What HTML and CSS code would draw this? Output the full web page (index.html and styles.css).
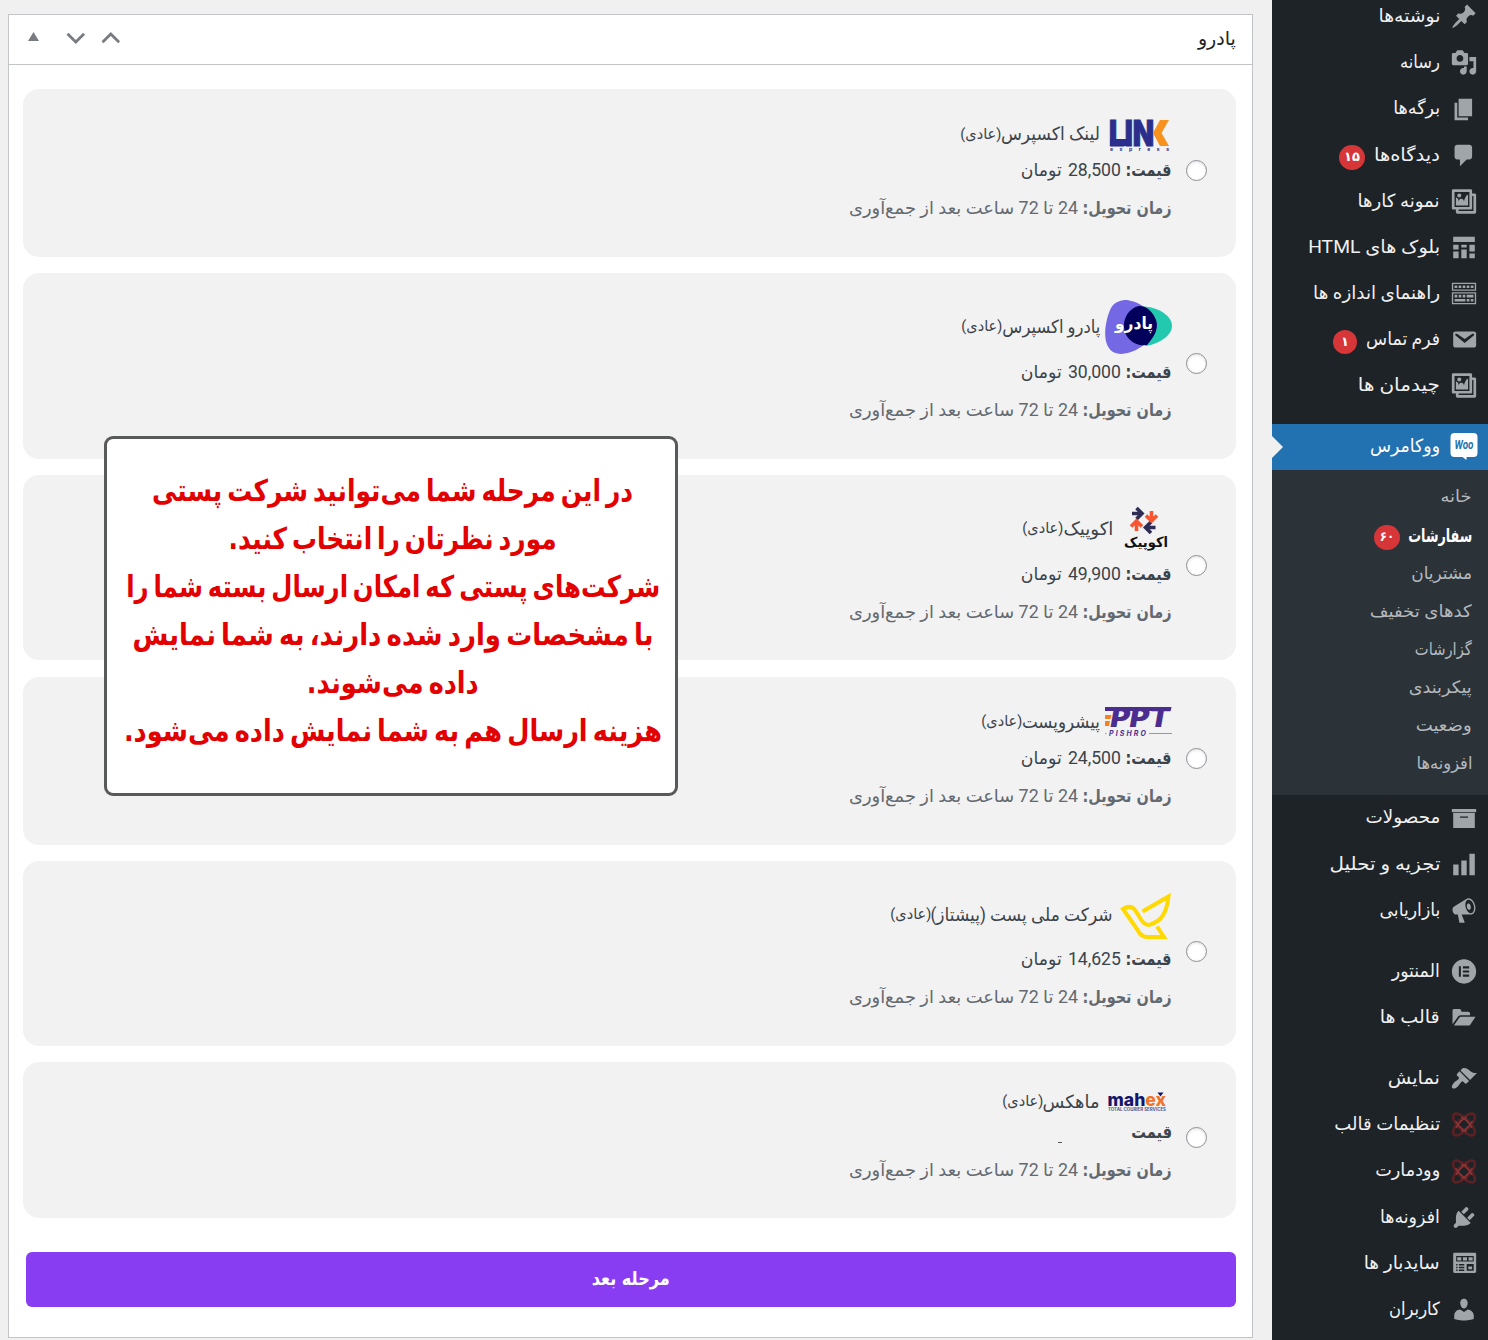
FILE: index.html
```html
<!DOCTYPE html>
<html lang="fa" dir="rtl">
<head>
<meta charset="utf-8">
<title>پادرو</title>
<link rel="stylesheet" href="styles.css">
</head>
<body>
<nav class="sidebar">
  <a class="item"><svg class="icon" viewBox="0 0 20 20"><path d="M10.44 3.02l1.82-1.82 6.36 6.35-1.83 1.82c-1.05-.68-2.48-.57-3.41.36l-.75.75c-.92.93-1.04 2.35-.35 3.41l-1.83 1.82-2.41-2.41-2.8 2.79c-.42.42-3.38 2.71-3.8 2.29s1.86-3.39 2.28-3.81l2.79-2.79L4.1 9.36l1.83-1.82c1.05.69 2.48.57 3.4-.36l.75-.75c.93-.92 1.05-2.35.36-3.41z"/></svg><span class="fit" data-w="62">نوشته‌ها</span></a>
  <a class="item"><svg class="icon" viewBox="0 0 20 20"><path fill-rule="evenodd" d="M13 11V4c0-.55-.45-1-1-1h-1.67L9 1H5L3.67 3H2c-.55 0-1 .45-1 1v7c0 .55.45 1 1 1h10c.55 0 1-.45 1-1zM7 4.5c1.38 0 2.5 1.12 2.5 2.5S8.38 9.5 7 9.5 4.500 8.380 4.500 7 5.620 4.500 7 4.500zM14 6h5v10.500c0 1.380-1.120 2.500-2.500 2.500S14 17.880 14 16.500s1.120-2.500 2.500-2.500c.17 0 .34.020.5.050V9h-3V6zm-4 8.050V13h2v3.500c0 1.380-1.120 2.500-2.500 2.500S7 17.880 7 16.500 8.120 14 9.500 14c.17 0 .34.020.5.050z"/></svg><span class="fit" data-w="40">رسانه</span></a>
  <a class="item"><svg class="icon" viewBox="0 0 20 20"><path d="M6 15V2h10v13H6zm-1 1h8v2H3V5h2v11z"/></svg><span class="fit" data-w="47">برگه‌ها</span></a>
  <a class="item"><svg class="icon" viewBox="0 0 20 20"><path d="M5 2h9c1.1 0 2 .9 2 2v7c0 1.1-.9 2-2 2h-2l-5 5v-5H5c-1.100 0-2-.9-2-2V4c0-1.100.9-2 2-2z"/></svg><span class="fit" data-w="66">دیدگاه‌ها</span><b class="badge">۱۵</b></a>
  <a class="item"><svg class="icon" viewBox="0 0 20 20"><path fill-rule="evenodd" d="M16 4h1.960c.57 0 1.040.47 1.040 1.040v12.920c0 .57-.47 1.040-1.040 1.040H5.040C4.470 19 4 18.530 4 17.960V16H2.040C1.470 16 1 15.530 1 14.960V2.040C1 1.470 1.470 1 2.040 1h12.920c.57 0 1.040.47 1.040 1.040V4zM3 14h11V3H3v11zm5-8.500C8 4.670 7.330 4 6.500 4S5 4.670 5 5.500 5.670 7 6.500 7 8 6.330 8 5.500zm2 4.500s1-5 3-5v8H4V7c2 0 2 3 2 3s.33-2 2-2 2 2 2 2zm7 7V6h-1v8.960c0 .57-.47 1.040-1.040 1.040H6v1h11z"/></svg><span class="fit" data-w="82">نمونه کارها</span></a>
  <a class="item"><svg class="icon" viewBox="0 0 20 20"><path d="M2 2h16v4H2zM2 8h4v3.500H2zM8 8h4v2H8zM14 8h4v5h-4zM2 13h4v5H2zM8 11.500h4V18H8zM14 14.500h4V18h-4z"/></svg><span class="fit" data-w="132">بلوک های HTML</span></a>
  <a class="item"><svg class="icon" viewBox="0 0 20 20"><path fill-rule="evenodd" d="M19 2v6H1V2h18zm-1 5V3H2v4h16zM5 4v2H3V4h2zm3 0v2H6V4h2zm3 0v2H9V4h2zm3 0v2h-2V4h2zm3 0v2h-2V4h2zm2 5v9H1V9h18zm-1 8v-7H2v7h16zM5 11v2H3v-2h2zm3 0v2H6v-2h2zm3 0v2H9v-2h2zm6 0v2h-5v-2h5zm-6 3v2H3v-2h8zm3 0v2h-2v-2h2zm3 0v2h-2v-2h2z"/></svg><span class="fit" data-w="127">راهنمای اندازه ها</span></a>
  <a class="item"><svg class="icon" viewBox="0 0 20 20"><path fill-rule="evenodd" d="M3.870 4h13.250C18.370 4 19 4.590 19 5.790v8.420c0 1.190-.63 1.790-1.880 1.790H3.870c-1.250 0-1.880-.6-1.880-1.790V5.790c0-1.200.63-1.790 1.880-1.790zm6.620 8.600l6.740-5.530c.24-.2.43-.66.13-1.070-.29-.41-.82-.42-1.170-.17l-5.700 3.860L4.800 5.830c-.35-.25-.88-.24-1.170.17-.3.41-.11.87.13 1.070z"/></svg><span class="fit" data-w="74">فرم تماس</span><b class="badge one">۱</b></a>
  <a class="item"><svg class="icon" viewBox="0 0 20 20"><path fill-rule="evenodd" d="M16 4h1.960c.57 0 1.040.47 1.040 1.040v12.920c0 .57-.47 1.040-1.040 1.040H5.040C4.470 19 4 18.530 4 17.960V16H2.040C1.470 16 1 15.530 1 14.960V2.040C1 1.470 1.470 1 2.040 1h12.920c.57 0 1.040.47 1.040 1.040V4zM3 14h11V3H3v11zm5-8.500C8 4.670 7.330 4 6.500 4S5 4.670 5 5.500 5.670 7 6.500 7 8 6.330 8 5.500zm2 4.500s1-5 3-5v8H4V7c2 0 2 3 2 3s.33-2 2-2 2 2 2 2zm7 7V6h-1v8.960c0 .57-.47 1.040-1.040 1.040H6v1h11z"/></svg><span class="fit" data-w="82">چیدمان ها</span></a>
  <a class="item active gap"><svg class="icon woo" viewBox="0 0 27 27"><path fill="#fff" d="M4 0h19a4 4 0 0 1 4 4v16a4 4 0 0 1-4 4h-7v3l-4-3H4a4 4 0 0 1-4-4V4a4 4 0 0 1 4-4z"/><text x="4" y="16" textLength="19" lengthAdjust="spacingAndGlyphs" direction="ltr">Woo</text></svg><span class="fit" data-w="70">ووکامرس</span></a>
  <div class="submenu">
    <a><span class="fit" data-w="31">خانه</span></a>
    <a class="current"><span class="fit" data-w="64">سفارشات</span><b class="badge">۶۰</b></a>
    <a><span class="fit" data-w="61">مشتریان</span></a>
    <a><span class="fit" data-w="102">کدهای تخفیف</span></a>
    <a><span class="fit" data-w="57">گزارشات</span></a>
    <a><span class="fit" data-w="63">پیکربندی</span></a>
    <a><span class="fit" data-w="56">وضعیت</span></a>
    <a><span class="fit" data-w="56">افزونه‌ها</span></a>
  </div>
  <a class="item"><svg class="icon" viewBox="0 0 20 20"><path fill-rule="evenodd" d="M19 3v2.300H1V3h18zM2 6h16v11H2V6zm11 3.500V8.500H7v1h6z"/></svg><span class="fit" data-w="75">محصولات</span></a>
  <a class="item"><svg class="icon" viewBox="0 0 20 20"><path d="M18 18V2h-4v16h4zm-6 0V7H8v11h4zm-6 0v-8H2v8h4z"/></svg><span class="fit" data-w="111">تجزیه و تحلیل</span></a>
  <a class="item"><svg class="icon" viewBox="0 0 20 20"><path fill-rule="evenodd" d="M18.150 5.940c.46 1.620.38 3.220-.02 4.480-.42 1.280-1.260 2.180-2.300 2.480-.16.060-.26.060-.4.060-.06.020-.12.020-.18.020-.06.020-.14.020-.22.020h-6.800l2.220 5.500c.02.140-.06.260-.14.340-.08.100-.24.160-.34.160H6.950c-.1 0-.26-.06-.34-.16-.08-.08-.16-.2-.14-.34l-1-5.500H4.250l-.02-.02c-.5.060-1.080-.18-1.540-.62s-.88-1.080-1.060-1.880c-.24-.8-.2-1.560-.02-2.200.18-.62.58-1.080 1.060-1.300l.02-.02 9-5.400c.1-.06.18-.1.24-.16.060-.04.140-.08.240-.12.160-.08.280-.12.500-.18 1.040-.3 2.240.1 3.220.98s1.840 2.240 2.260 3.860zm-2.580 5.980h-.02c.4-.1.740-.34 1.040-.7.580-.7.860-1.760.860-3.040 0-.64-.1-1.300-.28-1.980-.34-1.360-1.020-2.500-1.780-3.240s-1.680-1.100-2.460-.88c-.82.220-1.400.960-1.700 2-.32 1.040-.28 2.360.06 3.720.38 1.360 1 2.500 1.800 3.240.78.740 1.620 1.100 2.480.88zm-2.540-7.080c.22-.04.42-.02.62.040.38.160.76.480 1.020 1s.42 1.200.42 1.780c0 .3-.04.56-.12.800-.18.480-.44.840-.86.940-.34.100-.8-.06-1.140-.4s-.64-.86-.78-1.500c-.18-.62-.12-1.240.02-1.720s.48-.84.82-.94z"/></svg><span class="fit" data-w="61">بازاریابی</span></a>
  <a class="item gap"><svg class="icon" viewBox="0 0 20 20"><path fill-rule="evenodd" d="M10 1a9 9 0 1 1 0 18 9 9 0 0 1 0-18zM6.200 6.200v7.600h1.500V6.200zM9.200 6.200v1.500h4.600V6.200zm0 3.050v1.500h4.600v-1.500zm0 3.050v1.500h4.600v-1.500z"/></svg><span class="fit" data-w="48">المنتور</span></a>
  <a class="item"><svg class="icon" viewBox="0 0 20 20"><path d="M1.500 15V5c0-.8.500-1.300 1.300-1.300h3.700C7.300 3.700 8 4.400 8 5.200v.6h5c.9 0 1.500.6 1.500 1.500v1H7.700c-.9 0-1.700.4-2.200 1.100zM2.500 16l4-5.800c.4-.6.900-.8 1.600-.8H18.500L15 14.900c-.5.8-1 1.100-1.800 1.100z"/></svg><span class="fit" data-w="60">قالب ها</span></a>
  <a class="item gap"><svg class="icon" viewBox="0 0 20 20"><path d="M14.480 11.060L7.410 3.990l1.500-1.500c.5-.56 2.300-.47 3.510.32 1.210.8 1.430 1.280 2.910 2.100 1.180.64 2.450 1.260 4.450.85zm-.71.71L6.700 4.700 4.930 6.470c-.39.39-.39 1.020 0 1.410l1.060 1.060c.39.39.39 1.030 0 1.420-.6.600-1.430 1.110-2.210 1.690-.35.26-.7.53-1.010.84C1.430 14.230.4 16.080 1.400 17.070c.99 1 2.840-.03 4.180-1.360.31-.31.58-.66.85-1.020.57-.78 1.080-1.610 1.690-2.210.39-.39 1.020-.39 1.410 0l1.060 1.060c.39.39 1.020.39 1.410 0z"/></svg><span class="fit" data-w="52">نمایش</span></a>
  <a class="item"><svg class="icon knot" viewBox="0 0 20 20"><g fill="none"><ellipse cx="10" cy="10" rx="10.600" ry="4.300" transform="rotate(45 10 10)"/><ellipse cx="10" cy="10" rx="10.600" ry="4.300" transform="rotate(-45 10 10)"/><path class="hot" d="M3.800 7.500c1.500 3 4 5.500 8 8M16.200 7.500c-1.500 3-4 5.500-8 8M8 4.500c3 1.500 6 4.500 8 8M12 4.500c-3 1.500-6 4.500-8 8"/></g></svg><span class="fit" data-w="106">تنظیمات قالب</span></a>
  <a class="item"><svg class="icon knot" viewBox="0 0 20 20"><g fill="none"><ellipse cx="10" cy="10" rx="10.600" ry="4.300" transform="rotate(45 10 10)"/><ellipse cx="10" cy="10" rx="10.600" ry="4.300" transform="rotate(-45 10 10)"/><path class="hot" d="M3.800 7.500c1.500 3 4 5.500 8 8M16.200 7.500c-1.500 3-4 5.500-8 8M8 4.500c3 1.500 6 4.500 8 8M12 4.500c-3 1.500-6 4.500-8 8"/></g></svg><span class="fit" data-w="65">وودمارت</span></a>
  <a class="item"><svg class="icon" viewBox="0 0 20 20"><path d="M13.110 4.360L9.870 7.600 8 5.730l3.240-3.240c.35-.34 1.050-.2 1.560.32.520.51.660 1.210.310 1.550zm-8 1.770l.91-1.120 9.010 9.010-1.190.84c-.71.710-2.630 1.160-3.820 1.160H6.140L4.900 17.260c-.59.590-1.540.590-2.120 0-.59-.58-.59-1.530 0-2.120l1.240-1.240v-3.880c0-1.130.4-3.190 1.090-3.890zm7.260 3.970l3.240-3.240c.34-.35 1.040-.21 1.550.31.520.51.660 1.210.31 1.550l-3.240 3.250z"/></svg><span class="fit" data-w="60">افزونه‌ها</span></a>
  <a class="item"><svg class="icon" viewBox="0 0 20 20"><path fill-rule="evenodd" d="M3 2h15c.6 0 1 .4 1 1v13c0 .6-.4 1-1 1H3c-.6 0-1-.4-1-1V3c0-.6.400-1 1-1zm1.200 2.500v4h13v-4zM5 5.300h3v2.400H5zm4.200 0h3v2.400h-3zm4.200 0h3v2.400h-3zM4.200 10.300v1.200h1v-1.200zm2 0v1.200h4v-1.200zM4.200 12.400v1.200h1v-1.200zm2 0v1.200h4v-1.200zM4.200 14.500v1h1v-1zm2 0v1h4v-1zM12 10.300v5h5.200v-5zm1.200 2h2.800v2h-2.800z"/></svg><span class="fit" data-w="76">سایدبار ها</span></a>
  <a class="item"><svg class="icon" viewBox="0 0 20 20"><path d="M10 9.250c-2.270 0-2.730-3.440-2.730-3.440C7 4.020 7.820 2 9.970 2c2.160 0 2.980 2.020 2.710 3.810 0 0-.41 3.440-2.680 3.440zm-2.800.75L10 11.820 12.720 10c2.390 0 4.520 2.330 4.520 4.530v2.490s-3.650 1.130-7.240 1.130c-3.650 0-7.240-1.130-7.240-1.130v-2.490c0-2.250 1.940-4.480 4.470-4.480z"/></svg><span class="fit" data-w="51">کاربران</span></a>
</nav>

<main class="content">
  <section class="panel">
    <header class="panel-head">
      <h2><span class="fit" data-w="38">پادرو</span></h2>
      <svg class="handles" viewBox="0 0 96 20"><path class="line" d="M77.500 14.200l8.300-8.200 8.300 8.200M42.500 5.800l8.300 8.200 8.300-8.200"/><path d="M3 13l5.500-9 5.500 9z"/></svg>
    </header>
    <div class="list">
      <label class="card">
        <input type="radio" name="c">
        <div class="info">
          <div class="name h38">
            <svg class="logo" width="68" height="36" viewBox="0 0 68 36" direction="ltr"><text x="5" y="29.500" class="link" textLength="45" lengthAdjust="spacingAndGlyphs">LIN</text><path fill="#2b2e8c" d="M6 23h17v7H6z"/><path fill="#f7921e" d="M56 4h9l-7.500 13L65 30h-9l-7-13z"/><text x="6" y="34.500" class="express" textLength="59">express</text></svg>
            <span class="fit" data-w="99">لینک اکسپرس</span><small class="fit" data-w="41">(عادی)</small>
          </div>
          <div class="price"><b class="fit" data-w="46">قیمت:</b><span class="fit" data-w="53">28,500</span><span class="fit" data-w="41">تومان</span></div>
          <div class="time"><b class="fit" data-w="89">زمان تحویل:</b><span class="fit" data-w="229">24 تا 72 ساعت بعد از جمع‌آوری</span></div>
        </div>
      </label>
      <label class="card">
        <input type="radio" name="c">
        <div class="info">
          <div class="name h56">
            <svg class="logo" width="68" height="56" viewBox="0 0 68 56"><g transform="translate(0 1)"><path fill="#22c9ae" d="M33 7c14-3 35 6 35 19 0 10-14 18-26 20z"/><path fill="#7468e4" d="M20 0c9-1 27 8 32 20 4 10-6 23-20 30-10 5-22 6-27-2C-2 38 2 18 7 8c3-5 7-7 13-8z"/><path fill="#03005c" d="M35 6c8 0 14 6 17 14 3 9-2 17-9 25-11 2-22-6-23-17-1-10 5-20 15-22z"/><text x="30" y="29" class="padro" text-anchor="middle" textLength="38" lengthAdjust="spacingAndGlyphs">پادرو</text></g></svg>
            <span class="fit" data-w="98">پادرو اکسپرس</span><small class="fit" data-w="41">(عادی)</small>
          </div>
          <div class="price"><b class="fit" data-w="46">قیمت:</b><span class="fit" data-w="53">30,000</span><span class="fit" data-w="41">تومان</span></div>
          <div class="time"><b class="fit" data-w="89">زمان تحویل:</b><span class="fit" data-w="229">24 تا 72 ساعت بعد از جمع‌آوری</span></div>
        </div>
      </label>
      <label class="card">
        <input type="radio" name="c">
        <div class="info">
          <div class="name h56">
            <svg class="logo" width="55" height="56" viewBox="0 0 55 56"><g fill="none" stroke-width="3.600"><g stroke="#2f2c55"><path d="M15 12.500h9M19.500 7l5.500 5.500-5.500 5.500"/><path d="M38.500 26.500h-9M34 21l-5.500 5.500 5.500 5.500"/></g><g stroke="#f9532f"><path d="M34.500 10v9M29 14.500l5.500 5.500 5.500-5.500"/><path d="M19.500 30v-9M14 25.500l5.500-5.500 5.500 5.500"/></g></g><text x="29" y="46" class="okopic" text-anchor="middle" textLength="44" lengthAdjust="spacingAndGlyphs">اکوپیک</text></svg>
            <span class="fit" data-w="50">اکوپیک</span><small class="fit" data-w="41">(عادی)</small>
          </div>
          <div class="price"><b class="fit" data-w="46">قیمت:</b><span class="fit" data-w="53">49,900</span><span class="fit" data-w="41">تومان</span></div>
          <div class="time"><b class="fit" data-w="89">زمان تحویل:</b><span class="fit" data-w="229">24 تا 72 ساعت بعد از جمع‌آوری</span></div>
        </div>
      </label>
      <label class="card">
        <input type="radio" name="c">
        <div class="info">
          <div class="name h38">
            <svg class="logo" width="68" height="36" viewBox="0 0 68 36" direction="ltr"><path fill="#f58220" d="M1 11h6.500l-1 4H1zM1 17h5l-1 5H1z"/><path fill="#4b2d8f" d="M1 3h66.500l-1 4H1z"/><text x="6.500" y="23" class="ppt" textLength="59" lengthAdjust="spacingAndGlyphs">PPT</text><text x="5" y="31.500" class="pishro" textLength="37">PISHRO</text><path stroke="#999" d="M1 29.500h1.500M45 29.500h23"/></svg>
            <span class="fit" data-w="78">پیشروپست</span><small class="fit" data-w="41">(عادی)</small>
          </div>
          <div class="price"><b class="fit" data-w="46">قیمت:</b><span class="fit" data-w="53">24,500</span><span class="fit" data-w="41">تومان</span></div>
          <div class="time"><b class="fit" data-w="89">زمان تحویل:</b><span class="fit" data-w="229">24 تا 72 ساعت بعد از جمع‌آوری</span></div>
        </div>
      </label>
      <label class="card">
        <input type="radio" name="c">
        <div class="info">
          <div class="name h56">
            <svg class="logo" width="55" height="56" viewBox="0 0 55 56"><path fill="none" stroke="#ffd900" stroke-width="4" d="M25.500 24.500L51.500 9.500C50.500 20 48 27 43 32c-4 4-8 5-11 6-3 0-5-1-7-4l-7-11c-3-4-7-4-12-1l14 20c3 6 6 8 10 8h17l-7-10.500"/></svg>
            <span class="fit" data-w="182">شرکت ملی پست (پیشتاز)</span><small class="fit" data-w="41">(عادی)</small>
          </div>
          <div class="price"><b class="fit" data-w="46">قیمت:</b><span class="fit" data-w="53">14,625</span><span class="fit" data-w="41">تومان</span></div>
          <div class="time"><b class="fit" data-w="89">زمان تحویل:</b><span class="fit" data-w="229">24 تا 72 ساعت بعد از جمع‌آوری</span></div>
        </div>
      </label>
      <label class="card">
        <input type="radio" name="c">
        <div class="info">
          <div class="name h26">
            <svg class="logo" width="68" height="26" viewBox="0 0 68 26" direction="ltr"><text x="3.500" y="17.500" class="mahex" textLength="58.500" lengthAdjust="spacingAndGlyphs"><tspan fill="#15156b">mah</tspan><tspan fill="#f0742a">ex</tspan></text><path fill="#15156b" d="M53.500 4.500h6l-3 4z"/><text x="4" y="22.500" class="tcs" textLength="58" lengthAdjust="spacingAndGlyphs">TOTAL COURIER SERVICES</text></svg>
            <span class="fit" data-w="57">ماهکس</span><small class="fit" data-w="41">(عادی)</small>
          </div>
          <div class="price"><b class="fit" data-w="41">قیمت</b><i class="speck"></i></div>
          <div class="time"><b class="fit" data-w="89">زمان تحویل:</b><span class="fit" data-w="229">24 تا 72 ساعت بعد از جمع‌آوری</span></div>
        </div>
      </label>
      <button class="next"><span class="fit" data-w="78">مرحله بعد</span></button>
    </div>
  </section>
</main>

<aside class="note">
  <p><span class="fit" data-w="481">در این مرحله شما می‌توانید شرکت پستی</span></p>
  <p><span class="fit" data-w="328">مورد نظرتان را انتخاب کنید.</span></p>
  <p><span class="fit" data-w="534">شرکت‌های پستی که امکان ارسال بسته شما را</span></p>
  <p><span class="fit" data-w="521">با مشخصات وارد شده دارند، به شما نمایش</span></p>
  <p><span class="fit" data-w="172">داده می‌شوند.</span></p>
  <p><span class="fit" data-w="538">هزینه ارسال هم به شما نمایش داده می‌شود.</span></p>
</aside>
<script src="fit.js"></script>
</body>
</html>
```
FILE: fit.js
```js
// Condenses or widens each label horizontally to its intended measure.
document.querySelectorAll('.fit').forEach(function (el) {
  var inner = document.createElement('span');
  inner.className = 'fit-inner';
  inner.textContent = el.textContent;
  el.textContent = '';
  el.appendChild(inner);
  var w = Number(el.dataset.w);
  var natural = inner.getBoundingClientRect().width;
  el.style.width = w + 'px';
  inner.style.transform = 'scaleX(' + (w / natural) + ')';
});
```
FILE: styles.css
```css
* { box-sizing: border-box; }
body {
  margin: 0;
  height: 1340px;
  display: flex;
  overflow: hidden;
  background: #f0f0f1;
  color: #3c434a;
  font: 18px/1.4 Roboto, "DejaVu Sans", sans-serif;
}
.fit { display: block; flex: none; white-space: nowrap; }
.fit-inner { display: inline-block; transform-origin: right center; }

.sidebar { width: 216px; flex: none; margin-top: -6.3px; background: #1d2327; color: #f0f0f1; height: 1347px; }
.item { display: flex; align-items: center; height: 46.15px; padding-right: 10px; }
.item.gap { margin-top: 15px; }
.item .fit { margin-right: 10px; position: relative; top: -1px; }
.icon { width: 28px; height: 27px; flex: none; fill: #a0a5aa; }
.icon.knot { stroke: #5a2124; stroke-width: 2; }
.icon .hot { stroke: #8d3436; stroke-width: 1.2; }
.active { position: relative; height: 46px; background: #2271b1; color: #fff; }
.active::after {
  content: ""; position: absolute; left: 0; top: 12px;
  border: 11px solid transparent; border-left-color: #f0f0f1; border-right-width: 0;
}
.woo text { fill: #2271b1; font: bold italic 12px Roboto, sans-serif; }
.badge {
  margin-right: 9px; min-width: 26px; height: 25px; border-radius: 13px; position: relative; top: 2px;
  background: #d63638; color: #fff; font-size: 13px; line-height: 23px; text-align: center;
}
.badge.one { min-width: 24px; height: 24px; }
.submenu { background: #2c3338; color: #b4b9be; padding: 8px 16px 11px; height: 325px; }
.submenu a { display: flex; align-items: center; height: 38.2px; font-size: 17px; }
.submenu .current { color: #fff; font: bold 18px "DejaVu Sans Condensed", sans-serif; }
.submenu .badge { margin-right: 8px; }

.content { flex: 1; padding: 14px 19px 2px 8px; }
.panel { height: 1324px; background: #fff; border: 1px solid #c3c4c7; }
.panel-head { height: 50px; padding: 0 16px; display: flex; align-items: center; justify-content: space-between; border-bottom: 1px solid #c3c4c7; }
h2 { margin: 0; color: #1d2327; font-size: 19px; font-weight: 400; }
.handles { width: 96px; height: 20px; fill: #787c82; margin-top: -3px; }
.handles .line { fill: none; stroke: #787c82; stroke-width: 2.8; }
.list { padding: 24px 16px 0 14px; display: flex; flex-direction: column; gap: 16.2px; }
.card { display: flex; align-items: center; gap: 14px; padding: 0 29px 0 0; background: #f2f2f2; border-radius: 16px; }
.card input {
  appearance: none; width: 21px; height: 21px; margin: -5px 0 0; flex: none;
  border: 1px solid #8c8f94; border-radius: 50%; background: #fff; box-shadow: inset 0 1px 3px rgba(0,0,0,.12);
}
.info { padding: 26px 0 28px; }
.name, .price, .time { display: flex; align-items: center; }
.h38 { height: 38px; }
.h56 { height: 55.5px; }
.h26 { height: 26px; }
.logo { flex: none; margin-left: 4px; overflow: visible; }
.name small { font-size: 15px; }
.price { height: 36px; gap: 5px; }
.price span + span { margin-right: 1px; }
.time { height: 40px; gap: 5px; color: #646970; }
.price, .time { font-size: 17.6px; }
.price .fit, .time .fit { margin-top: -1px; }
.price b, .time b { font: bold 17.6px/1.4 "DejaVu Sans Condensed", sans-serif; }
.speck { width: 4px; height: 1px; background: #555; margin: 20px 64px 0 0; }
.next {
  height: 55px; margin: 17.3px 0 0 3px; border: 0; border-radius: 6px; background: #883df2; color: #fff;
  display: flex; align-items: center; justify-content: center;
  font: bold 19px "DejaVu Sans Condensed", sans-serif; padding: 0 0 2px;
}

.link { font: 900 35px Inter, sans-serif; fill: #2b2e8c; stroke: #2b2e8c; stroke-width: 1; }
.express { font: bold 5px Inter, sans-serif; fill: #2b2e8c; }
.padro { font: bold 17px "DejaVu Sans", sans-serif; fill: #fff; }
.okopic { font: bold 14px "DejaVu Sans", sans-serif; fill: #111; }
.ppt { font: italic 900 27px Inter, sans-serif; fill: #4b2d8f; }
.pishro { font: italic bold 7px Inter, sans-serif; fill: #4b2d8f; }
.mahex { font: 800 18px Inter, sans-serif; }
.tcs { font: bold 4.5px Inter, sans-serif; fill: #55558a; }

.note {
  position: absolute; left: 104px; top: 436px; width: 574px; height: 360px; padding: 28px 0 0 4px;
  border: 3px solid #58595b; border-radius: 9px; background: #fff; color: #e30000;
  font: bold 30px/48px "DejaVu Sans Condensed", sans-serif; word-spacing: -4px;
}
.note p { margin: 0; height: 48px; display: flex; justify-content: center; }
```
